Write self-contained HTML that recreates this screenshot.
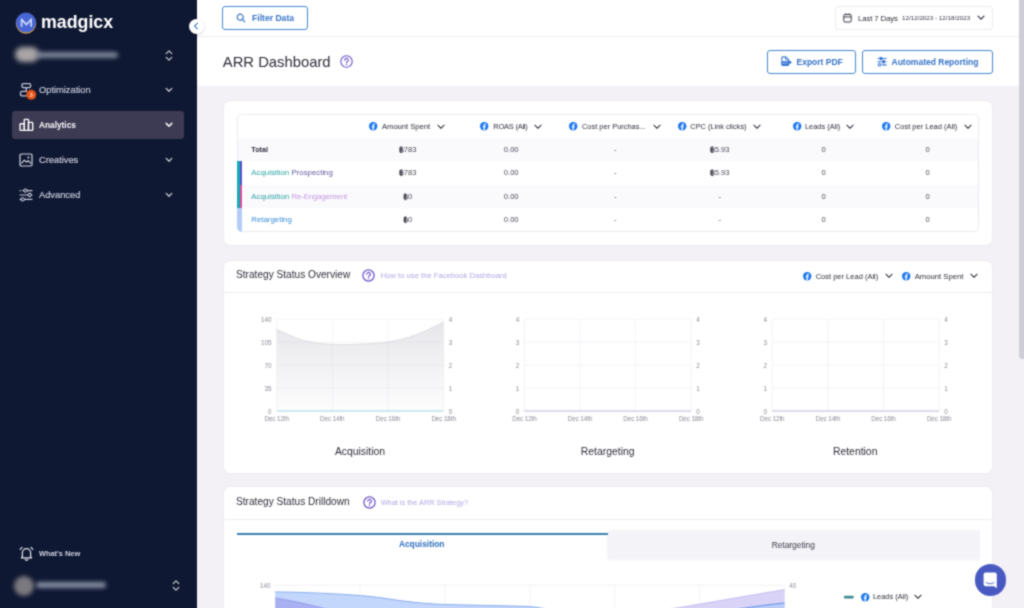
<!DOCTYPE html>
<html><head><meta charset="utf-8">
<style>
*{box-sizing:border-box;margin:0;padding:0}
html,body{width:1024px;height:608px;overflow:hidden;background:#f3f1f6;font-family:"Liberation Sans",sans-serif;color:#2e2d3a}
.abs,.t{position:absolute}
.t{white-space:nowrap;line-height:1;transform:translateY(-50%)}
#side{position:absolute;left:-20px;top:-20px;width:217px;height:648px;background:#0f1832}
#main{position:absolute;left:197px;top:-20px;width:847px;height:648px;background:#f3f1f6}
.card{position:absolute;background:#fff;border-radius:6px;box-shadow:0 0 2px rgba(60,50,90,.10)}
.btn{position:absolute;border:1px solid #4586cb;border-radius:3px;background:#fff}
.bt{color:#3573c6;font-weight:700}
.nav{color:#c3c7d8;font-size:9.3px;-webkit-text-stroke:.2px #c3c7d8}
svg{position:absolute;overflow:visible}
.c{transform:translate(-50%,-50%);font-size:7.6px;color:#4a4956}
.r{font-size:7.85px}
.bs{position:relative;display:inline-block;vertical-align:-1.1px;margin-right:.5px}
.ax{font-size:6.3px;color:#8c8b96}
</style></head><body><svg width="0" height="0" style="position:absolute"><filter id="soft" x="0" y="0" width="100%" height="100%" color-interpolation-filters="sRGB"><feConvolveMatrix order="3" kernelMatrix="1 2 1 2 8 2 1 2 1" divisor="20" edgeMode="duplicate" preserveAlpha="true"/></filter></svg><div id="outer" style="position:absolute;left:-20px;top:-20px;width:1064px;height:648px;overflow:hidden;will-change:transform;filter:url(#soft);background:#f3f1f6"><div id="root" style="position:absolute;left:20px;top:20px;width:1024px;height:608px">
<div id="main"></div>
<!-- top bars -->
<div class="abs" style="left:197px;top:-20px;width:822px;height:57px;background:#fff;border-bottom:1px solid #eeedf2"></div>
<div class="abs" style="left:197px;top:37px;width:822px;height:49px;background:#fff"></div>
<!-- scrollbar -->
<div class="abs" style="left:1019px;top:-20px;width:25px;height:648px;background:#f3f1f6"></div>
<div class="abs" style="left:1019px;top:-20px;width:25px;height:379px;background:#cfcdd6;border-radius:3px 0 0 3px"></div>

<!-- SIDEBAR -->
<div id="side"></div>
<!--SB-START-->
<!-- logo -->
<svg style="left:15px;top:12px" width="22" height="22" viewBox="0 0 22 22">
  <circle cx="11" cy="11.6" r="10.2" fill="#e0a63a"/>
  <circle cx="11" cy="10.6" r="10" fill="#4866d6"/>
  <path d="M6.6 14.2V7.2L11.4 12.6L16.2 7.2V14.2" fill="none" stroke="#cfd8f7" stroke-width="1.6" stroke-linejoin="round" stroke-linecap="round"/>
</svg>
<div class="t" style="left:41px;top:22.5px;font-size:17.8px;font-weight:700;color:#fff;letter-spacing:0px">madgicx</div>
<!-- blurred account -->
<div class="abs" style="left:15px;top:47px;width:24px;height:15px;border-radius:8px;background:#a9a4a6;filter:blur(2.5px)"></div>
<div class="abs" style="left:36px;top:51.5px;width:82px;height:6px;border-radius:3px;background:#8e97ab;filter:blur(2px);opacity:.85"></div>
<svg style="left:165px;top:49px" width="8" height="13" viewBox="0 0 8 13"><path d="M1.2 4.6L4 1.8L6.8 4.6M1.2 8.4L4 11.2L6.8 8.4" fill="none" stroke="#c9cbd6" stroke-width="1.2" stroke-linecap="round" stroke-linejoin="round"/></svg>

<!-- nav: Optimization -->
<svg style="left:19px;top:82px" width="18" height="18" viewBox="0 0 18 18">
  <rect x="3" y="1.6" width="8.6" height="4" rx="1.3" fill="none" stroke="#c3c7d8" stroke-width="1.3"/>
  <path d="M7.3 5.6V9.4M7.6 9.4H2.9a1.4 1.4 0 0 0 -1.4 1.4V12.4a1.4 1.4 0 0 0 1.4 1.4H7.6" fill="none" stroke="#c3c7d8" stroke-width="1.3" stroke-linejoin="round"/>
  <circle cx="12.2" cy="12.7" r="5" fill="#e4531a"/>
  <text x="12.2" y="14.7" font-size="5.6" font-weight="700" fill="#ffd9c4" text-anchor="middle" font-family="Liberation Sans">3</text>
</svg>
<div class="t nav" style="left:39px;top:90.7px">Optimization</div>
<svg style="left:165px;top:86.5px" width="8" height="6" viewBox="0 0 8 6"><path d="M1.2 1.4L4 4.2L6.8 1.4" fill="none" stroke="#c9cbd6" stroke-width="1.3" stroke-linecap="round" stroke-linejoin="round"/></svg>

<!-- nav: Analytics (active) -->
<div class="abs" style="left:12px;top:111px;width:172px;height:28px;border-radius:3px;background:#3d3a53"></div>
<svg style="left:19px;top:118px" width="15" height="14" viewBox="0 0 15 14" fill="none" stroke="#fff" stroke-width="1.4" stroke-linejoin="round">
  <rect x="1.1" y="5.8" width="4.2" height="6.6" rx="0.6"/><rect x="5.3" y="1.4" width="4.2" height="11" rx="0.6"/><rect x="9.5" y="4.4" width="4.2" height="8" rx="0.6"/>
</svg>
<div class="t nav" style="left:39px;top:124.8px;color:#fff;font-weight:700;font-size:8.3px;-webkit-text-stroke:0">Analytics</div>
<svg style="left:165px;top:122px" width="8" height="6" viewBox="0 0 8 6"><path d="M1.2 1.4L4 4.2L6.8 1.4" fill="none" stroke="#fff" stroke-width="1.5" stroke-linecap="round" stroke-linejoin="round"/></svg>

<!-- nav: Creatives -->
<svg style="left:19px;top:153px" width="14" height="14" viewBox="0 0 14 14">
  <rect x="1" y="1" width="12" height="12" rx="1.2" fill="none" stroke="#d6d8e2" stroke-width="1.2"/>
  <path d="M2.4 10.4L5.4 7.2L7.4 9.2L9.2 7.6L11.8 10.4" fill="none" stroke="#d6d8e2" stroke-width="1.1" stroke-linejoin="round"/>
  <circle cx="9.4" cy="4.4" r="1" fill="#d6d8e2"/>
</svg>
<div class="t nav" style="left:39px;top:161.2px">Creatives</div>
<svg style="left:165px;top:157px" width="8" height="6" viewBox="0 0 8 6"><path d="M1.2 1.4L4 4.2L6.8 1.4" fill="none" stroke="#c9cbd6" stroke-width="1.3" stroke-linecap="round" stroke-linejoin="round"/></svg>

<!-- nav: Advanced -->
<svg style="left:19px;top:188px" width="14" height="14" viewBox="0 0 14 14" fill="none" stroke="#c9ccdb" stroke-width="1.1" stroke-linecap="round">
  <path d="M1 2.6H1.6M3.8 2.6H4.7M8.3 2.6H13M1 7H8.9M12.5 7H13M1 11.4H1.9M5.5 11.4H13"/>
  <circle cx="6.5" cy="2.6" r="1.6"/><circle cx="10.7" cy="7" r="1.6"/><circle cx="3.7" cy="11.4" r="1.6"/>
</svg>
<div class="t nav" style="left:39px;top:196.3px">Advanced</div>
<svg style="left:165px;top:192px" width="8" height="6" viewBox="0 0 8 6"><path d="M1.2 1.4L4 4.2L6.8 1.4" fill="none" stroke="#c9cbd6" stroke-width="1.3" stroke-linecap="round" stroke-linejoin="round"/></svg>

<!-- what's new -->
<svg style="left:19px;top:546px" width="15" height="15" viewBox="0 0 15 15" fill="none" stroke="#e6e7ee" stroke-width="1.2" stroke-linecap="round" stroke-linejoin="round">
  <path d="M3.4 10.6V6.8a4.1 4.1 0 0 1 8.2 0V10.6L12.6 11.8H2.4Z"/>
  <path d="M6.2 13.4a1.4 1.4 0 0 0 2.6 0"/>
  <path d="M1.2 3.4L3 1.4M13.8 3.4L12 1.4"/>
</svg>
<div class="t" style="left:39px;top:554px;font-size:7.4px;font-weight:700;color:#cfd2e2">What's New</div>
<!-- blurred user -->
<div class="abs" style="left:14px;top:575.5px;width:20px;height:20px;border-radius:10px;background:#7c797f;filter:blur(2px)"></div>
<div class="abs" style="left:36px;top:582px;width:70px;height:6px;border-radius:3px;background:#9aa3b8;filter:blur(2px);opacity:.85"></div>
<svg style="left:172px;top:579px" width="8" height="13" viewBox="0 0 8 13"><path d="M1.2 4.6L4 1.8L6.8 4.6M1.2 8.4L4 11.2L6.8 8.4" fill="none" stroke="#c9cbd6" stroke-width="1.2" stroke-linecap="round" stroke-linejoin="round"/></svg>
<!-- collapse button -->
<div class="abs" style="left:188.6px;top:18.5px;width:15px;height:15px;border-radius:8px;background:#fff;box-shadow:0 1px 3px rgba(30,30,60,.18)"></div>
<svg style="left:192.9px;top:22.1px" width="6" height="8" viewBox="0 0 6 8"><path d="M4.4 1.2L1.6 4L4.4 6.8" fill="none" stroke="#4784c8" stroke-width="1.15" stroke-linecap="round" stroke-linejoin="round"/></svg>
<!--SB-END-->
<!--TB-START-->
<!-- filter data -->
<div class="btn" style="left:222px;top:6px;width:86px;height:24px"></div>
<svg style="left:236px;top:12.5px" width="10" height="10" viewBox="0 0 10 10" fill="none" stroke="#3a78c4" stroke-width="1.2" stroke-linecap="round"><circle cx="4.2" cy="4.2" r="3"/><path d="M6.5 6.5L8.8 8.8"/></svg>
<div class="t bt" style="left:252px;top:18px;font-size:8.6px">Filter Data</div>
<!-- date picker -->
<div class="abs" style="left:835px;top:6px;width:158px;height:23.5px;border:1px solid #ecebf1;border-radius:3px;background:#fff"></div>
<svg style="left:843.1px;top:13.1px" width="9" height="10" viewBox="0 0 9 10" fill="none" stroke="#3a3947" stroke-width="1"><rect x="0.8" y="1.5" width="7.4" height="7.5" rx="1.1"/><path d="M0.8 3.9H8.2M2.7 0.4V1.6M6.3 0.4V1.6"/></svg>
<div class="t" style="left:858px;top:18.9px;font-size:7.8px;letter-spacing:-0.12px;color:#2e2d3a">Last 7 Days</div>
<div class="t" style="left:902px;top:18.3px;font-size:6.25px;color:#3a3947;letter-spacing:0">12/12/2023 - 12/18/2023</div>
<svg style="left:976.7px;top:15.1px" width="8" height="6" viewBox="0 0 8 6"><path d="M1 1.2L4 4.2L7 1.2" fill="none" stroke="#2e2d3a" stroke-width="1.2" stroke-linecap="round" stroke-linejoin="round"/></svg>
<!-- title -->
<div class="t" style="left:222.8px;top:61.8px;font-size:14.8px;color:#2e2d3a">ARR Dashboard</div>
<svg style="left:339.5px;top:55px" width="13" height="13" viewBox="0 0 13 13"><circle cx="6.5" cy="6.5" r="5.7" fill="none" stroke="#6a50c8" stroke-width="1.1"/><path d="M4.7 5.2a1.8 1.8 0 1 1 2.6 1.6c-.6.3-.8.6-.8 1.2" fill="none" stroke="#6a50c8" stroke-width="1.1" stroke-linecap="round"/><circle cx="6.5" cy="9.6" r=".7" fill="#6a50c8"/></svg>
<!-- export / automated -->
<div class="btn" style="left:767px;top:50px;width:89px;height:24px"></div>
<svg style="left:781px;top:56.4px" width="11" height="10.5" viewBox="0 0 11 10.5"><path d="M4.8 0.9H1.6a.8.8 0 0 0 -.8 .8V8.6a.8.8 0 0 0 .8 .8H6.8a.8.8 0 0 0 .8 -.8V3.7Z" fill="none" stroke="#3d7ccd" stroke-width="1.1" stroke-linejoin="round"/><path d="M4.6 1.2V3.9H7.4" fill="none" stroke="#3d7ccd" stroke-width="0.9"/><rect x="0.9" y="5.2" width="6.9" height="4.3" rx=".7" fill="#3574d4"/><path d="M2 7.3H3.2M4 7.3H5.2M6 7.3H6.6" stroke="#d8e6fa" stroke-width="1"/><path d="M7.6 6.3L10.2 6.3M8.7 4.8L10.3 6.3L8.7 7.8Z" fill="#3574d4" stroke="#3574d4" stroke-width="0.9" stroke-linejoin="round"/></svg>
<div class="t bt" style="left:796.5px;top:62px;font-size:8.5px">Export PDF</div>
<div class="btn" style="left:862px;top:50px;width:131px;height:24px"></div>
<svg style="left:876.6px;top:57.2px" width="10" height="9.4" viewBox="0 0 10 9.4" fill="none" stroke="#3574d4" stroke-width="1.05" stroke-linecap="round"><path d="M0.7 1.5H1.1M5.6 1.5H9.2M0.7 4.7H4.3M8.6 4.7H9.2M5.4 7.9H9.2"/><circle cx="3.9" cy="1.5" r="1.25" fill="#3574d4"/><circle cx="6.6" cy="4.7" r="1.25" fill="#3574d4"/><circle cx="2.6" cy="7.8" r="1.3"/></svg>
<div class="t bt" style="left:891.5px;top:62px;font-size:8.5px">Automated Reporting</div>
<!--TB-END-->
<!--TC-START-->
<div class="card" style="left:223.5px;top:101px;width:768.5px;height:144px"></div>
<div class="abs" style="left:236.5px;top:113.5px;width:742px;height:118.5px;border:1px solid #eceaf1;border-radius:5px;background:#fff"></div>
<div class="abs" style="left:237.5px;top:138px;width:740px;height:23px;background:#faf9fc"></div>
<div class="abs" style="left:237.5px;top:184.5px;width:740px;height:23.5px;background:#faf9fc"></div>
<div class="abs" style="left:236.7px;top:161px;width:3.3px;height:47px;background:#17a9b4"></div>
<div class="abs" style="left:240px;top:161px;width:2px;height:23.5px;background:#5a4ed0"></div>
<div class="abs" style="left:240px;top:184.5px;width:2px;height:23.5px;background:#e0489b"></div>
<div class="abs" style="left:236.7px;top:208px;width:5.3px;height:23.6px;background:#b3cdf7;border-radius:0 0 0 5px"></div>
<svg style="left:369.2px;top:122.2px" width="8.4" height="8.4" viewBox="0 0 10 10"><circle cx="5" cy="5" r="5" fill="#1a76f0"/><path d="M6.9 6.4L7.15 5H5.8V4.1c0-.4.2-.8.8-.8H7.2V2.05S6.65 1.95 6.1 1.95c-1.1 0-1.85.7-1.85 1.9V5H3V6.4H4.25V9.95a5 5 0 0 0 1.55 0V6.4Z" fill="#fff"/></svg>
<div class="t" style="left:382px;top:126.60000000000001px;font-size:7.6px;color:#2e2d3a;">Amount Spent</div>
<svg style="left:436.6px;top:123.5px" width="8" height="6" viewBox="0 0 8 6"><path d="M0.9 1.2L4 4.3L7.1 1.2" fill="none" stroke="#2e2d3a" stroke-width="1.05" stroke-linecap="round" stroke-linejoin="round"/></svg>

<svg style="left:480.4px;top:122.2px" width="8.4" height="8.4" viewBox="0 0 10 10"><circle cx="5" cy="5" r="5" fill="#1a76f0"/><path d="M6.9 6.4L7.15 5H5.8V4.1c0-.4.2-.8.8-.8H7.2V2.05S6.65 1.95 6.1 1.95c-1.1 0-1.85.7-1.85 1.9V5H3V6.4H4.25V9.95a5 5 0 0 0 1.55 0V6.4Z" fill="#fff"/></svg>
<div class="t" style="left:493.3px;top:126.60000000000001px;font-size:7.5px;color:#2e2d3a;letter-spacing:-0.25px">ROAS (All)</div>
<svg style="left:533.6px;top:123.5px" width="8" height="6" viewBox="0 0 8 6"><path d="M0.9 1.2L4 4.3L7.1 1.2" fill="none" stroke="#2e2d3a" stroke-width="1.05" stroke-linecap="round" stroke-linejoin="round"/></svg>

<svg style="left:569.4px;top:122.2px" width="8.4" height="8.4" viewBox="0 0 10 10"><circle cx="5" cy="5" r="5" fill="#1a76f0"/><path d="M6.9 6.4L7.15 5H5.8V4.1c0-.4.2-.8.8-.8H7.2V2.05S6.65 1.95 6.1 1.95c-1.1 0-1.85.7-1.85 1.9V5H3V6.4H4.25V9.95a5 5 0 0 0 1.55 0V6.4Z" fill="#fff"/></svg>
<div class="t" style="left:582px;top:126.60000000000001px;font-size:7.45px;color:#2e2d3a;">Cost per Purchas...</div>
<svg style="left:653.1px;top:123.5px" width="8" height="6" viewBox="0 0 8 6"><path d="M0.9 1.2L4 4.3L7.1 1.2" fill="none" stroke="#2e2d3a" stroke-width="1.05" stroke-linecap="round" stroke-linejoin="round"/></svg>

<svg style="left:677.8px;top:122.2px" width="8.4" height="8.4" viewBox="0 0 10 10"><circle cx="5" cy="5" r="5" fill="#1a76f0"/><path d="M6.9 6.4L7.15 5H5.8V4.1c0-.4.2-.8.8-.8H7.2V2.05S6.65 1.95 6.1 1.95c-1.1 0-1.85.7-1.85 1.9V5H3V6.4H4.25V9.95a5 5 0 0 0 1.55 0V6.4Z" fill="#fff"/></svg>
<div class="t" style="left:690.3px;top:126.60000000000001px;font-size:7.4px;color:#2e2d3a;">CPC (Link clicks)</div>
<svg style="left:752.5px;top:123.5px" width="8" height="6" viewBox="0 0 8 6"><path d="M0.9 1.2L4 4.3L7.1 1.2" fill="none" stroke="#2e2d3a" stroke-width="1.05" stroke-linecap="round" stroke-linejoin="round"/></svg>

<svg style="left:792.5px;top:122.2px" width="8.4" height="8.4" viewBox="0 0 10 10"><circle cx="5" cy="5" r="5" fill="#1a76f0"/><path d="M6.9 6.4L7.15 5H5.8V4.1c0-.4.2-.8.8-.8H7.2V2.05S6.65 1.95 6.1 1.95c-1.1 0-1.85.7-1.85 1.9V5H3V6.4H4.25V9.95a5 5 0 0 0 1.55 0V6.4Z" fill="#fff"/></svg>
<div class="t" style="left:805px;top:126.60000000000001px;font-size:7.4px;color:#2e2d3a;">Leads (All)</div>
<svg style="left:846px;top:123.5px" width="8" height="6" viewBox="0 0 8 6"><path d="M0.9 1.2L4 4.3L7.1 1.2" fill="none" stroke="#2e2d3a" stroke-width="1.05" stroke-linecap="round" stroke-linejoin="round"/></svg>

<svg style="left:882.3px;top:122.2px" width="8.4" height="8.4" viewBox="0 0 10 10"><circle cx="5" cy="5" r="5" fill="#1a76f0"/><path d="M6.9 6.4L7.15 5H5.8V4.1c0-.4.2-.8.8-.8H7.2V2.05S6.65 1.95 6.1 1.95c-1.1 0-1.85.7-1.85 1.9V5H3V6.4H4.25V9.95a5 5 0 0 0 1.55 0V6.4Z" fill="#fff"/></svg>
<div class="t" style="left:894.8px;top:126.60000000000001px;font-size:7.5px;color:#2e2d3a;">Cost per Lead (All)</div>
<svg style="left:963.7px;top:123.5px" width="8" height="6" viewBox="0 0 8 6"><path d="M0.9 1.2L4 4.3L7.1 1.2" fill="none" stroke="#2e2d3a" stroke-width="1.05" stroke-linecap="round" stroke-linejoin="round"/></svg>

<div class="t c" style="left:407.6px;top:149.9px"><svg class="bs" width="4.4" height="7" viewBox="0 0 4.4 7"><path d="M0.9 1.1H2.5a1.15 1.15 0 0 1 0 2.3H0.9ZM0.9 3.4H2.8a1.25 1.25 0 0 1 0 2.5H0.9ZM0.9 1.1V5.9" fill="none" stroke="#3a3946" stroke-width="0.95" stroke-linejoin="round"/><path d="M2.05 0.1V6.9" stroke="#3a3946" stroke-width="0.8"/></svg>783</div>
<div class="t c" style="left:407.6px;top:173.2px"><svg class="bs" width="4.4" height="7" viewBox="0 0 4.4 7"><path d="M0.9 1.1H2.5a1.15 1.15 0 0 1 0 2.3H0.9ZM0.9 3.4H2.8a1.25 1.25 0 0 1 0 2.5H0.9ZM0.9 1.1V5.9" fill="none" stroke="#3a3946" stroke-width="0.95" stroke-linejoin="round"/><path d="M2.05 0.1V6.9" stroke="#3a3946" stroke-width="0.8"/></svg>783</div>
<div class="t c" style="left:407.6px;top:196.5px"><svg class="bs" width="4.4" height="7" viewBox="0 0 4.4 7"><path d="M0.9 1.1H2.5a1.15 1.15 0 0 1 0 2.3H0.9ZM0.9 3.4H2.8a1.25 1.25 0 0 1 0 2.5H0.9ZM0.9 1.1V5.9" fill="none" stroke="#3a3946" stroke-width="0.95" stroke-linejoin="round"/><path d="M2.05 0.1V6.9" stroke="#3a3946" stroke-width="0.8"/></svg>0</div>
<div class="t c" style="left:407.6px;top:219.8px"><svg class="bs" width="4.4" height="7" viewBox="0 0 4.4 7"><path d="M0.9 1.1H2.5a1.15 1.15 0 0 1 0 2.3H0.9ZM0.9 3.4H2.8a1.25 1.25 0 0 1 0 2.5H0.9ZM0.9 1.1V5.9" fill="none" stroke="#3a3946" stroke-width="0.95" stroke-linejoin="round"/><path d="M2.05 0.1V6.9" stroke="#3a3946" stroke-width="0.8"/></svg>0</div>
<div class="t c" style="left:511.2px;top:149.9px">0.00</div>
<div class="t c" style="left:511.2px;top:173.2px">0.00</div>
<div class="t c" style="left:511.2px;top:196.5px">0.00</div>
<div class="t c" style="left:511.2px;top:219.8px">0.00</div>
<div class="t c" style="left:615.3px;top:149.9px">-</div>
<div class="t c" style="left:615.3px;top:173.2px">-</div>
<div class="t c" style="left:615.3px;top:196.5px">-</div>
<div class="t c" style="left:615.3px;top:219.8px">-</div>
<div class="t c" style="left:719.7px;top:149.9px"><svg class="bs" width="4.4" height="7" viewBox="0 0 4.4 7"><path d="M0.9 1.1H2.5a1.15 1.15 0 0 1 0 2.3H0.9ZM0.9 3.4H2.8a1.25 1.25 0 0 1 0 2.5H0.9ZM0.9 1.1V5.9" fill="none" stroke="#3a3946" stroke-width="0.95" stroke-linejoin="round"/><path d="M2.05 0.1V6.9" stroke="#3a3946" stroke-width="0.8"/></svg>5.93</div>
<div class="t c" style="left:719.7px;top:173.2px"><svg class="bs" width="4.4" height="7" viewBox="0 0 4.4 7"><path d="M0.9 1.1H2.5a1.15 1.15 0 0 1 0 2.3H0.9ZM0.9 3.4H2.8a1.25 1.25 0 0 1 0 2.5H0.9ZM0.9 1.1V5.9" fill="none" stroke="#3a3946" stroke-width="0.95" stroke-linejoin="round"/><path d="M2.05 0.1V6.9" stroke="#3a3946" stroke-width="0.8"/></svg>5.93</div>
<div class="t c" style="left:719.7px;top:196.5px">-</div>
<div class="t c" style="left:719.7px;top:219.8px">-</div>
<div class="t c" style="left:823.6px;top:149.9px">0</div>
<div class="t c" style="left:823.6px;top:173.2px">0</div>
<div class="t c" style="left:823.6px;top:196.5px">0</div>
<div class="t c" style="left:823.6px;top:219.8px">0</div>
<div class="t c" style="left:927.5px;top:149.9px">0</div>
<div class="t c" style="left:927.5px;top:173.2px">0</div>
<div class="t c" style="left:927.5px;top:196.5px">0</div>
<div class="t c" style="left:927.5px;top:219.8px">0</div>
<div class="t" style="left:251.3px;top:150px;font-size:7.2px;font-weight:700;color:#2e2d3a">Total</div>
<div class="t r" style="left:251.3px;top:173.3px"><span style="color:#2fa5a6">Acquisition</span> <span style="color:#66579f">Prospecting</span></div>
<div class="t r" style="left:251.3px;top:196.9px"><span style="color:#2fa5a6">Acquisition</span> <span style="color:#c49be2;letter-spacing:-0.12px">Re-Engagement</span></div>
<div class="t r" style="left:251.3px;top:219.6px"><span style="color:#3b8fd8">Retargeting</span></div>
<!--TC-END-->
<!--OV-START-->
<div class="card" style="left:223.5px;top:260.5px;width:768.5px;height:212px"></div>
<div class="abs" style="left:223.5px;top:292px;width:768.5px;height:1px;background:#eeedf2"></div>
<div class="t" style="left:236px;top:274.6px;font-size:10.15px;color:#2e2d3a">Strategy Status Overview</div>
<svg style="left:362.2px;top:269.2px" width="13" height="13" viewBox="0 0 13 13"><circle cx="6.5" cy="6.5" r="5.6" fill="none" stroke="#6a50c8" stroke-width="1.25"/><path d="M4.8 5.2a1.75 1.75 0 1 1 2.6 1.55c-.6.3-.85.6-.85 1.15" fill="none" stroke="#6a50c8" stroke-width="1.25" stroke-linecap="round"/><circle cx="6.5" cy="9.6" r=".7" fill="#6a50c8"/></svg>
<div class="t" style="left:380.7px;top:276.2px;font-size:7.65px;color:#b3a6e3">How to use the Facebook Dashboard</div>
<svg style="left:803.3px;top:271.8px" width="8.4" height="8.4" viewBox="0 0 10 10"><circle cx="5" cy="5" r="5" fill="#1a76f0"/><path d="M6.9 6.4L7.15 5H5.8V4.1c0-.4.2-.8.8-.8H7.2V2.05S6.65 1.95 6.1 1.95c-1.1 0-1.85.7-1.85 1.9V5H3V6.4H4.25V9.95a5 5 0 0 0 1.55 0V6.4Z" fill="#fff"/></svg>
<div class="t" style="left:815.7px;top:276.7px;font-size:7.5px;color:#2e2d3a">Cost per Lead (All)</div>
<svg style="left:885px;top:273.1px" width="8" height="6" viewBox="0 0 8 6"><path d="M0.9 1.2L4 4.3L7.1 1.2" fill="none" stroke="#2e2d3a" stroke-width="1.05" stroke-linecap="round" stroke-linejoin="round"/></svg>
<svg style="left:902.2px;top:271.8px" width="8.4" height="8.4" viewBox="0 0 10 10"><circle cx="5" cy="5" r="5" fill="#1a76f0"/><path d="M6.9 6.4L7.15 5H5.8V4.1c0-.4.2-.8.8-.8H7.2V2.05S6.65 1.95 6.1 1.95c-1.1 0-1.85.7-1.85 1.9V5H3V6.4H4.25V9.95a5 5 0 0 0 1.55 0V6.4Z" fill="#fff"/></svg>
<div class="t" style="left:914.7px;top:276.7px;font-size:7.7px;color:#2e2d3a">Amount Spent</div>
<svg style="left:970px;top:273.1px" width="8" height="6" viewBox="0 0 8 6"><path d="M0.9 1.2L4 4.3L7.1 1.2" fill="none" stroke="#2e2d3a" stroke-width="1.05" stroke-linecap="round" stroke-linejoin="round"/></svg>
<svg style="left:0;top:0" width="1024" height="608" viewBox="0 0 1024 608">
<defs><linearGradient id="ga" x1="0" y1="0" x2="0" y2="1"><stop offset="0" stop-color="#e7e6ea"/><stop offset="1" stop-color="#fdfdfe"/></linearGradient></defs>
<path d="M276.70 329.49 C281.34 331.39 295.24 338.35 304.52 340.84 C313.79 343.33 323.06 343.90 332.33 344.44 C341.61 344.99 350.88 344.50 360.15 344.12 C369.42 343.73 378.69 343.68 387.97 342.15 C397.24 340.62 406.51 338.27 415.78 334.94 C425.06 331.60 438.96 324.28 443.60 322.15 L443.60 411.00 L276.70 411.00 Z" fill="url(#ga)"/>
<path d="M276.70 329.49 C281.34 331.39 295.24 338.35 304.52 340.84 C313.79 343.33 323.06 343.90 332.33 344.44 C341.61 344.99 350.88 344.50 360.15 344.12 C369.42 343.73 378.69 343.68 387.97 342.15 C397.24 340.62 406.51 338.27 415.78 334.94 C425.06 331.60 438.96 324.28 443.60 322.15" fill="none" stroke="#d6d5da" stroke-width="0.8"/>
<path d="M276.70 319.20H443.60" stroke="rgba(150,148,165,0.11)" stroke-width="0.8"/>
<path d="M276.70 342.15H443.60" stroke="rgba(150,148,165,0.11)" stroke-width="0.8"/>
<path d="M276.70 365.10H443.60" stroke="rgba(150,148,165,0.11)" stroke-width="0.8"/>
<path d="M276.70 388.05H443.60" stroke="rgba(150,148,165,0.11)" stroke-width="0.8"/>
<path d="M276.70 411.00H443.60" stroke="rgba(150,148,165,0.11)" stroke-width="0.8"/>
<path d="M276.70 319.20V411.00" stroke="rgba(150,148,165,0.11)" stroke-width="0.8"/>
<path d="M332.33 319.20V411.00" stroke="rgba(150,148,165,0.11)" stroke-width="0.8"/>
<path d="M387.97 319.20V411.00" stroke="rgba(150,148,165,0.11)" stroke-width="0.8"/>
<path d="M443.60 319.20V411.00" stroke="rgba(150,148,165,0.11)" stroke-width="0.8"/>
<path d="M276.70 411.00H443.60" stroke="#9ad3e3" stroke-width="0.9"/>
</svg>
<div class="t ax" style="left:271.5px;top:320.2px;transform:translate(-100%,-50%)">140</div>
<div class="t ax" style="left:271.5px;top:343.1px;transform:translate(-100%,-50%)">105</div>
<div class="t ax" style="left:271.5px;top:366.1px;transform:translate(-100%,-50%)">70</div>
<div class="t ax" style="left:271.5px;top:389.1px;transform:translate(-100%,-50%)">35</div>
<div class="t ax" style="left:271.5px;top:412.0px;transform:translate(-100%,-50%)">0</div>
<div class="t ax" style="left:448.8px;top:320.2px">4</div>
<div class="t ax" style="left:448.8px;top:343.1px">3</div>
<div class="t ax" style="left:448.8px;top:366.1px">2</div>
<div class="t ax" style="left:448.8px;top:389.1px">1</div>
<div class="t ax" style="left:448.8px;top:412.0px">0</div>
<div class="t ax" style="left:276.7px;top:418.8px;transform:translate(-50%,-50%);letter-spacing:-0.1px">Dec 12th</div>
<div class="t ax" style="left:332.3px;top:418.8px;transform:translate(-50%,-50%);letter-spacing:-0.1px">Dec 14th</div>
<div class="t ax" style="left:388.0px;top:418.8px;transform:translate(-50%,-50%);letter-spacing:-0.1px">Dec 16th</div>
<div class="t ax" style="left:443.6px;top:418.8px;transform:translate(-50%,-50%);letter-spacing:-0.1px">Dec 18th</div>
<div class="t" style="left:360px;top:451.8px;font-size:10.4px;color:#2e2d3a;transform:translate(-50%,-50%)">Acquisition</div>
<svg style="left:0;top:0" width="1024" height="608" viewBox="0 0 1024 608">
<path d="M524.40 319.20H691.10" stroke="#f3eff5" stroke-width="0.8"/>
<path d="M524.40 342.15H691.10" stroke="#f3eff5" stroke-width="0.8"/>
<path d="M524.40 365.10H691.10" stroke="#f3eff5" stroke-width="0.8"/>
<path d="M524.40 388.05H691.10" stroke="#f3eff5" stroke-width="0.8"/>
<path d="M524.40 411.00H691.10" stroke="#f3eff5" stroke-width="0.8"/>
<path d="M524.40 319.20V411.00" stroke="#f3eff5" stroke-width="0.8"/>
<path d="M579.97 319.20V411.00" stroke="#f3eff5" stroke-width="0.8"/>
<path d="M635.53 319.20V411.00" stroke="#f3eff5" stroke-width="0.8"/>
<path d="M691.10 319.20V411.00" stroke="#f3eff5" stroke-width="0.8"/>
<path d="M524.40 411.00H691.10" stroke="#b9b7d4" stroke-width="0.9"/>
</svg>
<div class="t ax" style="left:519.2px;top:320.2px;transform:translate(-100%,-50%)">4</div>
<div class="t ax" style="left:519.2px;top:343.1px;transform:translate(-100%,-50%)">3</div>
<div class="t ax" style="left:519.2px;top:366.1px;transform:translate(-100%,-50%)">2</div>
<div class="t ax" style="left:519.2px;top:389.1px;transform:translate(-100%,-50%)">1</div>
<div class="t ax" style="left:519.2px;top:412.0px;transform:translate(-100%,-50%)">0</div>
<div class="t ax" style="left:696.3px;top:320.2px">4</div>
<div class="t ax" style="left:696.3px;top:343.1px">3</div>
<div class="t ax" style="left:696.3px;top:366.1px">2</div>
<div class="t ax" style="left:696.3px;top:389.1px">1</div>
<div class="t ax" style="left:696.3px;top:412.0px">0</div>
<div class="t ax" style="left:524.4px;top:418.8px;transform:translate(-50%,-50%);letter-spacing:-0.1px">Dec 12th</div>
<div class="t ax" style="left:580.0px;top:418.8px;transform:translate(-50%,-50%);letter-spacing:-0.1px">Dec 14th</div>
<div class="t ax" style="left:635.5px;top:418.8px;transform:translate(-50%,-50%);letter-spacing:-0.1px">Dec 16th</div>
<div class="t ax" style="left:691.1px;top:418.8px;transform:translate(-50%,-50%);letter-spacing:-0.1px">Dec 18th</div>
<div class="t" style="left:607.7px;top:451.8px;font-size:10.4px;color:#2e2d3a;transform:translate(-50%,-50%)">Retargeting</div>
<svg style="left:0;top:0" width="1024" height="608" viewBox="0 0 1024 608">
<path d="M772.30 319.20H939.10" stroke="#f3eff5" stroke-width="0.8"/>
<path d="M772.30 342.15H939.10" stroke="#f3eff5" stroke-width="0.8"/>
<path d="M772.30 365.10H939.10" stroke="#f3eff5" stroke-width="0.8"/>
<path d="M772.30 388.05H939.10" stroke="#f3eff5" stroke-width="0.8"/>
<path d="M772.30 411.00H939.10" stroke="#f3eff5" stroke-width="0.8"/>
<path d="M772.30 319.20V411.00" stroke="#f3eff5" stroke-width="0.8"/>
<path d="M827.90 319.20V411.00" stroke="#f3eff5" stroke-width="0.8"/>
<path d="M883.50 319.20V411.00" stroke="#f3eff5" stroke-width="0.8"/>
<path d="M939.10 319.20V411.00" stroke="#f3eff5" stroke-width="0.8"/>
<path d="M772.30 411.00H939.10" stroke="#b9b7d4" stroke-width="0.9"/>
</svg>
<div class="t ax" style="left:767.1px;top:320.2px;transform:translate(-100%,-50%)">4</div>
<div class="t ax" style="left:767.1px;top:343.1px;transform:translate(-100%,-50%)">3</div>
<div class="t ax" style="left:767.1px;top:366.1px;transform:translate(-100%,-50%)">2</div>
<div class="t ax" style="left:767.1px;top:389.1px;transform:translate(-100%,-50%)">1</div>
<div class="t ax" style="left:767.1px;top:412.0px;transform:translate(-100%,-50%)">0</div>
<div class="t ax" style="left:944.3px;top:320.2px">4</div>
<div class="t ax" style="left:944.3px;top:343.1px">3</div>
<div class="t ax" style="left:944.3px;top:366.1px">2</div>
<div class="t ax" style="left:944.3px;top:389.1px">1</div>
<div class="t ax" style="left:944.3px;top:412.0px">0</div>
<div class="t ax" style="left:772.3px;top:418.8px;transform:translate(-50%,-50%);letter-spacing:-0.1px">Dec 12th</div>
<div class="t ax" style="left:827.9px;top:418.8px;transform:translate(-50%,-50%);letter-spacing:-0.1px">Dec 14th</div>
<div class="t ax" style="left:883.5px;top:418.8px;transform:translate(-50%,-50%);letter-spacing:-0.1px">Dec 16th</div>
<div class="t ax" style="left:939.1px;top:418.8px;transform:translate(-50%,-50%);letter-spacing:-0.1px">Dec 18th</div>
<div class="t" style="left:855.2px;top:451.8px;font-size:10.4px;color:#2e2d3a;transform:translate(-50%,-50%)">Retention</div>
<!--OV-END-->
<!--DR-START-->
<div class="card" style="left:223.5px;top:487.2px;width:768.5px;height:170px;border-radius:6px 6px 0 0"></div>
<div class="abs" style="left:223.5px;top:519px;width:768.5px;height:1px;background:#eeedf2"></div>
<div class="t" style="left:236px;top:502.2px;font-size:10.15px;color:#2e2d3a">Strategy Status Drilldown</div>
<svg style="left:362.5px;top:496.3px" width="13" height="13" viewBox="0 0 13 13"><circle cx="6.5" cy="6.5" r="5.6" fill="none" stroke="#6a50c8" stroke-width="1.25"/><path d="M4.8 5.2a1.75 1.75 0 1 1 2.6 1.55c-.6.3-.85.6-.85 1.15" fill="none" stroke="#6a50c8" stroke-width="1.25" stroke-linecap="round"/><circle cx="6.5" cy="9.6" r=".7" fill="#6a50c8"/></svg>
<div class="t" style="left:380.7px;top:502.6px;font-size:7.35px;color:#b3a6e3">What is the ARR Strategy?</div>
<div class="abs" style="left:608px;top:531px;width:371px;height:28px;background:#f4f3f7;border-radius:2px;box-shadow:0 0 2px 1px rgba(243,241,246,.9)"></div>
<div class="abs" style="left:236.5px;top:533px;width:371.5px;height:1.6px;background:#3b80ad"></div>
<div class="t" style="left:421.7px;top:544.2px;font-size:8.4px;font-weight:700;color:#2f6fbe;transform:translate(-50%,-50%)">Acquisition</div>
<div class="t" style="left:793.3px;top:544.7px;font-size:8.4px;color:#3a3946;transform:translate(-50%,-50%)">Retargeting</div>
<svg style="left:0;top:0" width="1024" height="640" viewBox="0 0 1024 640">
<path d="M275.2 585.2H784.5" stroke="#f0eff4" stroke-width="0.8"/>
<path d="M360.1 585.2V640" stroke="#f0eff4" stroke-width="0.8"/>
<path d="M445.0 585.2V640" stroke="#f0eff4" stroke-width="0.8"/>
<path d="M529.9 585.2V640" stroke="#f0eff4" stroke-width="0.8"/>
<path d="M614.7 585.2V640" stroke="#f0eff4" stroke-width="0.8"/>
<path d="M699.6 585.2V640" stroke="#f0eff4" stroke-width="0.8"/>
<path d="M784.5 585.2V640" stroke="#f0eff4" stroke-width="0.8"/>
<path d="M275.2 591.9 C310 592.3 340 594 360.7 595.6 C380 597.2 390 599.2 400 600.6 C415 602.6 428 603.8 442.8 604.4 C470 605.3 500 605.5 528.7 606.5 C536 607 540 607.8 546 609.4 L600 640 L275.2 640Z" fill="#c3d6fb"/>
<path d="M275.2 591.9 C310 592.3 340 594 360.7 595.6 C380 597.2 390 599.2 400 600.6 C415 602.6 428 603.8 442.8 604.4 C470 605.3 500 605.5 528.7 606.5 C536 607 540 607.8 546 609.4 L600 640" fill="none" stroke="#7fa8ea" stroke-width="0.9"/>
<path d="M275.2 597.9 C292 600.7 310 604.6 328 609.6 L420 640 L275.2 640Z" fill="#a9b1f3"/>
<path d="M275.2 597.9 C292 600.7 310 604.6 328 609.6 L420 640" fill="none" stroke="#8c93e4" stroke-width="0.8"/>
<path d="M489.7 640 L784.5 589.6 L784.5 640Z" fill="#d9d3f7"/>
<path d="M489.7 640 L784.5 589.6" fill="none" stroke="#bdb3ee" stroke-width="0.8"/>
<path d="M640 640 L739 609 C755 606.5 770 604.5 784.5 603 L784.5 640Z" fill="#b9cdf8"/>
<path d="M640 640 L739 609 C755 606.5 770 604.5 784.5 603" fill="none" stroke="#5f8fe6" stroke-width="1"/>
<rect x="844" y="595.8" width="9.6" height="2.6" rx="0.6" fill="#3f8a90"/>
</svg>
<div class="t ax" style="left:270.5px;top:585.6px;transform:translate(-100%,-50%)">140</div>
<div class="t ax" style="left:789.2px;top:585.6px">40</div>
<svg style="left:860.8px;top:592.8px" width="8.4" height="8.4" viewBox="0 0 10 10"><circle cx="5" cy="5" r="5" fill="#1a76f0"/><path d="M6.9 6.4L7.15 5H5.8V4.1c0-.4.2-.8.8-.8H7.2V2.05S6.65 1.95 6.1 1.95c-1.1 0-1.85.7-1.85 1.9V5H3V6.4H4.25V9.95a5 5 0 0 0 1.55 0V6.4Z" fill="#fff"/></svg>
<div class="t" style="left:873px;top:597.3px;font-size:7.4px;color:#2e2d3a">Leads (All)</div>
<svg style="left:914px;top:594.1px" width="8" height="6" viewBox="0 0 8 6"><path d="M0.9 1.2L4 4.3L7.1 1.2" fill="none" stroke="#2e2d3a" stroke-width="1.05" stroke-linecap="round" stroke-linejoin="round"/></svg>
<!--DR-END-->
<!--CH-START-->
<div class="abs" style="left:974.8px;top:564px;width:31.4px;height:31.6px;border-radius:16px;background:#4859c1"></div>
<svg style="left:982.8px;top:571.6px" width="15" height="17" viewBox="0 0 15 17"><path d="M2.6 0.5H11.8a2 2 0 0 1 2 2V16.3L11 14.2H2.6a2 2 0 0 1 -2 -2V2.5a2 2 0 0 1 2 -2Z" fill="#fff"/><path d="M3.2 10.6c2.2 1.7 5.6 1.7 7.8 0" fill="none" stroke="#4859c1" stroke-width="0.9" stroke-linecap="round"/></svg>
<!--CH-END-->
</div></div></body></html>
